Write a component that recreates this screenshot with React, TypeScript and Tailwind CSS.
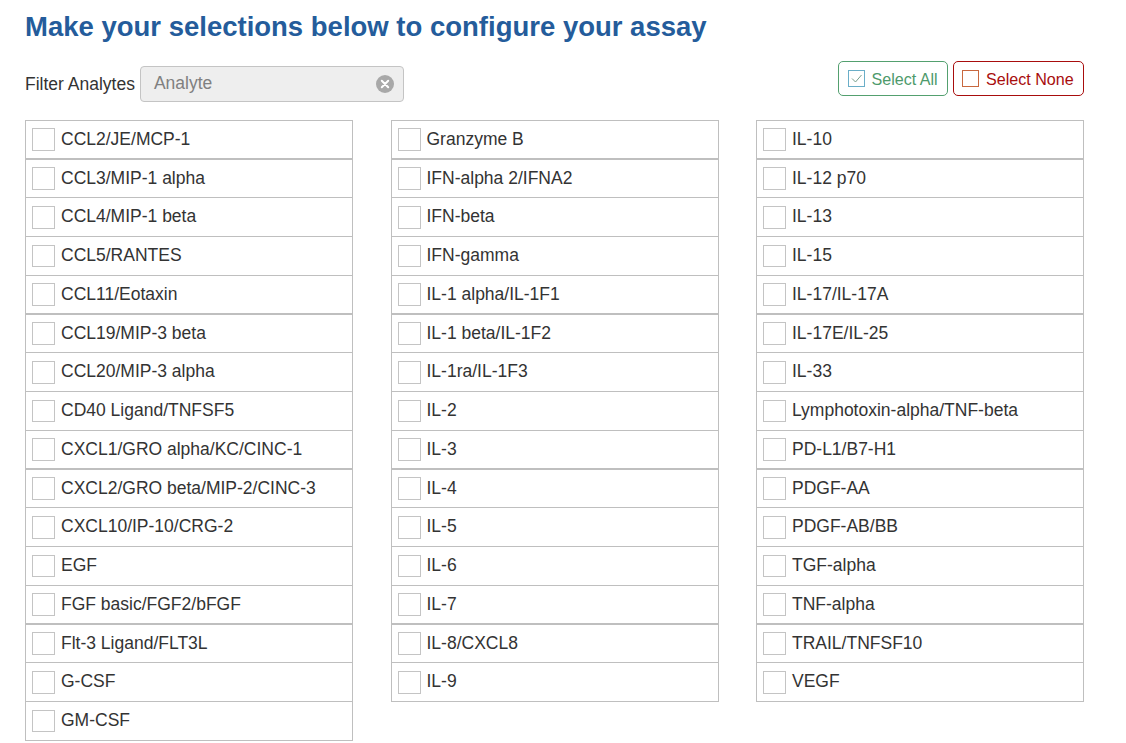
const columns = [
  ['CCL2/JE/MCP-1', 'CCL3/MIP-1 alpha', 'CCL4/MIP-1 beta', 'CCL5/RANTES', 'CCL11/Eotaxin', 'CCL19/MIP-3 beta', 'CCL20/MIP-3 alpha', 'CD40 Ligand/TNFSF5', 'CXCL1/GRO alpha/KC/CINC-1', 'CXCL2/GRO beta/MIP-2/CINC-3', 'CXCL10/IP-10/CRG-2', 'EGF', 'FGF basic/FGF2/bFGF', 'Flt-3 Ligand/FLT3L', 'G-CSF', 'GM-CSF'],
  ['Granzyme B', 'IFN-alpha 2/IFNA2', 'IFN-beta', 'IFN-gamma', 'IL-1 alpha/IL-1F1', 'IL-1 beta/IL-1F2', 'IL-1ra/IL-1F3', 'IL-2', 'IL-3', 'IL-4', 'IL-5', 'IL-6', 'IL-7', 'IL-8/CXCL8', 'IL-9'],
  ['IL-10', 'IL-12 p70', 'IL-13', 'IL-15', 'IL-17/IL-17A', 'IL-17E/IL-25', 'IL-33', 'Lymphotoxin-alpha/TNF-beta', 'PD-L1/B7-H1', 'PDGF-AA', 'PDGF-AB/BB', 'TGF-alpha', 'TNF-alpha', 'TRAIL/TNFSF10', 'VEGF'],
];

function AnalyteRow({ name }: { name: string }) {
  return (
    <div className="flex h-[39.75px] items-center border border-[#bfbfbf] pl-[6px] -mt-px first:mt-0 nth-[4n+1]:border-b-2 nth-[4n+1]:pt-px">
      <span className="h-[22.75px] w-[23px] shrink-0 border border-[#c4c4c4] bg-white" />
      <span className="ml-[6px] text-[17.5px] leading-none text-[#333]">{name}</span>
    </div>
  );
}

export default function App() {
  return (
    <div className="h-[743px] w-[1126px] overflow-hidden bg-white px-[25px] font-['Liberation_Sans',Arial,sans-serif]">
      <h1 className="pt-[11px] text-[27.5px] leading-[32px] font-bold text-[#245c9b]">
        Make your selections below to configure your assay
      </h1>

      <div className="mt-[18px] flex h-[58.75px] w-[1059px] items-start justify-between">
        <div className="mt-[5px] flex items-center">
          <label className="text-[17.5px] text-[#333]">Filter Analytes</label>
          <div className="ml-[5px] flex h-[36px] w-[264px] items-center justify-between rounded border border-[#c4c4c4] bg-[#eeeeee] pr-[9px] pl-[13px]">
            <span className="text-[17.5px] leading-none text-[#808080]">Analyte</span>
            <svg width="18" height="18" viewBox="0 0 18 18">
              <circle cx="9" cy="9" r="9" fill="#a8a8a8" />
              <path d="M5.8 5.8l6.4 6.4M12.2 5.8l-6.4 6.4" stroke="#fff" strokeWidth="2" strokeLinecap="round" />
            </svg>
          </div>
        </div>

        <div className="flex gap-[5px]">
          <button className="flex h-[35px] w-[110px] items-center rounded-[5px] border border-[#53a06f] pl-[9px] text-[16.1px] text-[#4d9a6b]">
            <svg width="18" height="18" viewBox="0 0 18 18" className="mr-[5.5px] shrink-0">
              <rect x="0.5" y="0.5" width="16" height="16" fill="#fff" stroke="#6aaec8" />
              <path d="M4 8.5l3.5 3.5 6-7" fill="none" stroke="#7a9f8c" strokeWidth="1" />
            </svg>
            <span className="translate-y-px">Select All</span>
          </button>
          <button className="flex h-[35px] w-[131px] items-center rounded-[5px] border border-[#a80d0d] pl-[8px] text-[16.1px] text-[#a80d0d]">
            <svg width="18" height="18" viewBox="0 0 18 18" className="mr-[6px] shrink-0">
              <rect x="0.5" y="0.5" width="16" height="16" fill="#fff" stroke="#c8683f" />
            </svg>
            <span className="translate-y-px">Select None</span>
          </button>
        </div>
      </div>

      <div className="grid w-[1059px] grid-cols-3 items-start gap-x-[37.5px]">
        {columns.map((col, i) => (
          <div key={i}>
            {col.map((name) => (
              <AnalyteRow key={name} name={name} />
            ))}
          </div>
        ))}
      </div>
    </div>
  );
}
